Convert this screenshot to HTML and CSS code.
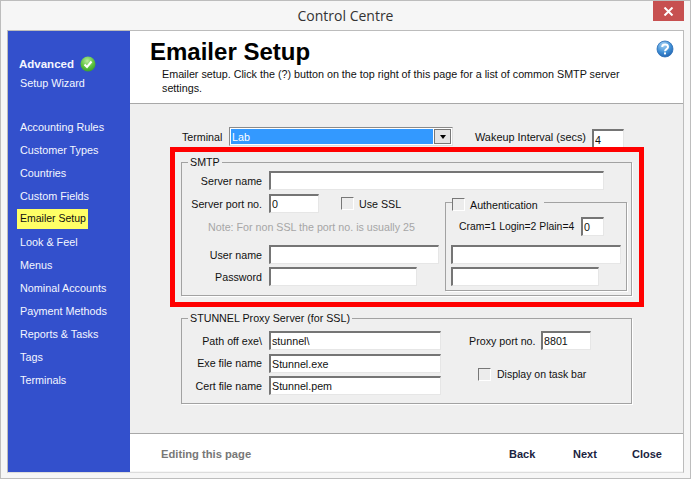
FILE: index.html
```html
<!DOCTYPE html>
<html lang="en">
<head>
<meta charset="utf-8">
<title>Control Centre</title>
<link rel="stylesheet" href="styles.css">
</head>
<body>
<div class="window">
  <header class="titlebar">
    <span class="title">Control Centre</span>
    <button class="close" aria-label="Close">
      <svg width="11" height="9" viewBox="0 0 11 9"><path d="M1.5 .5l8 8M9.500 .5l-8 8" stroke="#fff" stroke-width="2" fill="none"/></svg>
    </button>
  </header>
  <div class="frame">
    <nav class="sidebar">
      <div class="adv"><b>Advanced</b>
        <svg class="ok" width="16" height="16" viewBox="0 0 16 16"><defs><radialGradient id="g" cx=".45" cy=".3" r=".8"><stop offset="0" stop-color="#b9ec9c"/><stop offset=".55" stop-color="#5cc23e"/><stop offset="1" stop-color="#2f8f2a"/></radialGradient></defs><circle cx="8" cy="8" r="7.500" fill="url(#g)"/><path d="M4.500 8.500l2.500 2.500 4.500-5.500" stroke="#fff" stroke-width="2" fill="none"/></svg>
      </div>
      <a class="wizard">Setup Wizard</a>
      <ul class="menu">
        <li>Accounting Rules</li>
        <li>Customer Types</li>
        <li>Countries</li>
        <li>Custom Fields</li>
        <li class="current"><span>Emailer Setup</span></li>
        <li>Look &amp; Feel</li>
        <li>Menus</li>
        <li>Nominal Accounts</li>
        <li>Payment Methods</li>
        <li>Reports &amp; Tasks</li>
        <li>Tags</li>
        <li>Terminals</li>
      </ul>
    </nav>
    <main class="main">
      <section class="head">
        <div class="head-top">
          <h1>Emailer Setup</h1>
          <svg class="help" width="18" height="18" viewBox="0 0 18 18"><defs><radialGradient id="h" cx=".4" cy=".25" r=".85"><stop offset="0" stop-color="#a9d4f5"/><stop offset=".55" stop-color="#3f8fd6"/><stop offset="1" stop-color="#1c5aa8"/></radialGradient></defs><circle cx="9" cy="9" r="8" fill="url(#h)" stroke="#2a6cb5" stroke-width=".8"/><path d="M6.200 7c.2-3.200 5.800-3.200 5.800 0 0 2.200-3 2-3 4.200" stroke="#fff" stroke-width="2" fill="none"/><rect x="8" y="12.400" width="2" height="2" fill="#fff"/></svg>
        </div>
        <p>Emailer setup. Click the (?) button on the top right of this page for a list of common SMTP server settings.</p>
      </section>
      <section class="panel">
        <div class="top-row">
          <label class="term-label">Terminal</label>
          <div class="select"><span class="sel-val">Lab</span><span class="sel-btn"><i></i></span></div>
          <label class="wake-label">Wakeup Interval (secs)</label>
          <input class="field w-wake" value="4">
        </div>

        <fieldset class="group smtp">
          <legend>SMTP</legend>
          <div class="row">
            <label>Server name</label><input class="field w-server">
          </div>
          <div class="lower">
            <div class="left">
              <div class="row">
                <label>Server port no.</label><input class="field w-port" value="0">
                <input type="checkbox" class="check ssl-check"><span class="cb-text">Use SSL</span>
              </div>
              <p class="note">Note: For non SSL the port no. is usually 25</p>
              <div class="row">
                <label>User name</label><input class="field w-user">
              </div>
              <div class="row">
                <label>Password</label><input class="field w-pass">
              </div>
            </div>
            <fieldset class="group auth">
              <legend><input type="checkbox" class="check"><span class="cb-text">Authentication</span></legend>
              <div class="cram"><span>Cram=1 Login=2 Plain=4</span><input class="field w-cram" value="0"></div>
              <input class="field w-user auth-user">
              <input class="field w-pass auth-pass">
            </fieldset>
          </div>
        </fieldset>

        <fieldset class="group stunnel">
          <legend>STUNNEL Proxy Server (for SSL)</legend>
          <div class="st-cols">
            <div class="st-left">
              <div class="row"><label>Path off exe\</label><input class="field w-st" value="stunnel\"></div>
              <div class="row"><label>Exe file name</label><input class="field w-st" value="Stunnel.exe"></div>
              <div class="row"><label>Cert file name</label><input class="field w-st" value="Stunnel.pem"></div>
            </div>
            <div class="st-right">
              <div class="proxy"><span>Proxy port no.</span><input class="field w-port" value="8801"></div>
              <div class="task"><input type="checkbox" class="check"><span class="cb-text">Display on task bar</span></div>
            </div>
          </div>
        </fieldset>

        <div class="annotation"></div>
      </section>
      <footer class="foot">
        <span class="editing">Editing this page</span>
        <a class="back">Back</a>
        <a class="next">Next</a>
        <a class="closebtn">Close</a>
      </footer>
    </main>
  </div>
</div>
</body>
</html>
```
FILE: styles.css
```css
* { box-sizing: border-box; }
html, body { margin: 0; padding: 0; }
body { width: 691px; height: 479px; overflow: hidden; font-family: "Liberation Sans", Arial, sans-serif; font-size: 10.700px; color: #111; white-space: nowrap; }

.window { width: 691px; height: 479px; background: #f6f6f6; border: 1px solid #bdbdbd; display: flex; flex-direction: column; }

.titlebar { height: 29px; display: flex; justify-content: center; position: relative; flex: none; }
.title { font-size: 14px; line-height: 29px; color: #333; font-family: "Open Sans", "Liberation Sans", sans-serif; }
.close { position: absolute; right: 6px; top: 0; width: 31px; height: 20px; background: #c75050; border: 0; padding: 0; display: flex; align-items: center; justify-content: center; }

.frame { margin-left: 6px; width: 677px; height: 443px; border: 1px solid #bcbcbc; border-bottom-color: #dcdcdc; display: flex; flex: none; }

.sidebar { width: 122px; background: #3350cc; color: #f4f6ff; padding: 25px 0 0 11px; flex: none; font-size: 10.800px; }
.adv { display: flex; align-items: center; height: 16px; font-size: 11.500px; }
.adv b { font-weight: bold; }
.ok { margin-left: 6px; }
.wizard { display: block; margin: 3px 0 0 1px; line-height: 16px; }
.menu { list-style: none; margin: 25px 0 0 -2px; padding: 0; }
.menu li { height: 23px; line-height: 23px; padding-left: 3px; }
.menu .current { padding: 1px 0 0 0; }
.menu .current span { display: block; width: 71px; height: 20px; line-height: 18px; padding-left: 3px; background: #ffff66; color: #111; font-size: 10.500px; }

.main { flex: 1; display: flex; flex-direction: column; min-width: 0; }

.head { height: 73px; background: #fff; border-bottom: 1px solid #a8a8a8; flex: none; padding: 7px 0 0 20px; }
.head-top { display: flex; justify-content: space-between; align-items: flex-start; }
h1 { margin: 0; font-size: 24px; line-height: 27px; font-weight: bold; color: #000; }
.help { margin: 2px 9px 0 0; }
.head p { margin: 3px 0 0 12px; width: 480px; line-height: 13.500px; font-size: 10.750px; white-space: normal; }

.panel { position: relative; height: 329px; background: #efefef; flex: none; padding: 23px 0 0 51px; }

.top-row { display: flex; align-items: flex-start; height: 29px; }
.term-label { width: 48px; padding: 2px 0 0 1px; line-height: 16px; }
.select { width: 224px; height: 19px; display: flex; border: 1px solid #8a8a8a; border-right-color: #ddd; border-bottom-color: #ddd; padding: 1px; background: #fff; }
.sel-val { width: 203px; background: #3399ff; color: #fff; line-height: 16px; padding-left: 1px; }
.sel-btn { width: 17px; margin-left: 1px; background: #e4e4e4; border: 1px solid #777; display: flex; align-items: center; justify-content: center; }
.sel-btn i { border: 3px solid transparent; border-top: 4px solid #000; border-bottom: 0; width: 0; height: 0; }
.wake-label { margin-left: 22px; width: 117px; padding-top: 2px; line-height: 16px; font-size: 10.900px; }

.field { height: 19px; border-width: 2px 1px 1px 2px; border-style: solid; border-color: #757575 #e6e6e6 #e6e6e6 #757575; background: #fff; padding: 0 0 0 1px; margin: 0; font: inherit; color: #111; outline: none; border-radius: 0; }
.w-wake { width: 32px; height: 21px; margin-top: 2px; }
.w-server { width: 335px; }
.w-port { width: 50px; }
.w-user { width: 170px; }
.w-pass { width: 148px; }
.w-cram { width: 23px; }
.w-st { width: 172px; }

.group { margin: 0; min-width: 0; border: 1px solid #a2a2a2; box-shadow: 1px 1px 0 #fff; padding: 0; }
.group legend { padding: 0 2px; margin-left: 6px; line-height: 13px; height: 13px; }

.smtp { width: 451px; height: 140px; padding: 2px 0 0 0; }
.row { display: flex; align-items: center; }
.row label { width: 80px; text-align: right; margin-right: 7px; flex: none; line-height: 16px; }
.lower { display: flex; margin-top: 4px; }
.left { width: 263px; flex: none; }
.left > .row + .row { margin-top: 3px; }
.ssl-check { margin-left: 22px !important; }
.note { margin: 0; height: 32px; line-height: 28px; padding-left: 26px; color: #a6a6a6; }

.check { appearance: none; -webkit-appearance: none; width: 13px; height: 13px; margin: 0; background: #ececec; border: 1px solid; border-color: #777 #fff #fff #777; flex: none; border-radius: 0; }
.cb-text { margin-left: 5px; line-height: 14px; }

.auth { width: 182px; height: 97px; margin: 0; padding: 0 0 0 5px; }
.group.auth legend { display: flex; align-items: center; padding: 4px 6px 0 0; margin-left: 1px; height: 17px; }
.cram { display: flex; align-items: center; justify-content: space-between; height: 19px; margin: 6px 22px 9px 8px; }
.cram span { font-size: 10.400px; }
.auth-user, .auth-pass { display: block; }
.auth-pass { margin-top: 3px; }

.stunnel { width: 451px; height: 92px; margin-top: 16px; padding: 6px 0 0 0; }
.st-cols { display: flex; }
.st-left { width: 287px; flex: none; display: flex; flex-direction: column; gap: 3.500px; }
.proxy { display: flex; align-items: center; }
.proxy span { width: 72px; }
.task { display: flex; align-items: center; margin: 17px 0 0 10px; }
.task .check { margin-left: -1px; }
.task .cb-text { font-size: 10.500px; margin-left: 6px; }

.annotation { position: absolute; left: 40px; top: 43px; width: 474px; height: 160px; border: 5px solid #ff0000; pointer-events: none; }

.foot { height: 38px; background: #fff; border-top: 1px solid #a8a8a8; flex: none; display: flex; align-items: center; font-weight: bold; font-size: 11px; padding-top: 3px; color: #1a2340; }
.editing { color: #777; margin-left: 31px; width: 348px; font-size: 11.200px; }
.back { width: 64px; }
.next { width: 59px; }
```
